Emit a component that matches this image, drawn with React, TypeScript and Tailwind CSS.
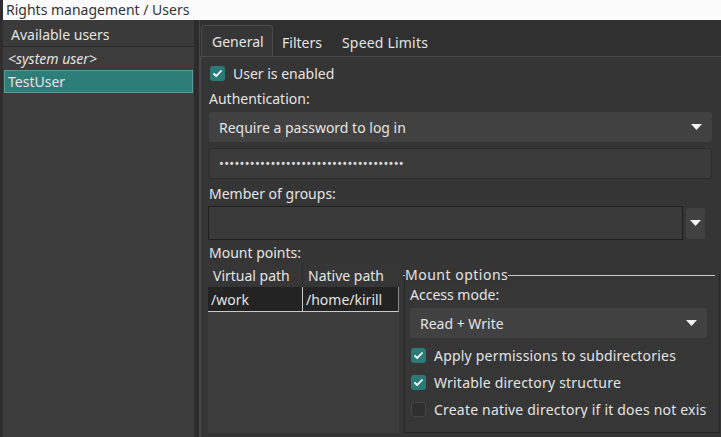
import React from 'react';

const font = { fontFamily: '"Noto Sans", "Open Sans", sans-serif' };

function Arrow() {
  return (
    <svg width="11" height="6" viewBox="0 0 11 6" className="shrink-0">
      <path d="M0 0 L11 0 L5.5 6 Z" fill="#f2f2f2" />
    </svg>
  );
}

function Check({ checked }: { checked: boolean }) {
  return (
    <div
      className={`w-[15px] h-[15px] rounded-[3px] flex items-center justify-center shrink-0 ${
        checked ? 'bg-[#2a7b77]' : 'bg-[#2f2f2f] border border-[#464646]'
      }`}
    >
      {checked && (
        <svg width="11" height="9" viewBox="0 0 11 9">
          <path d="M1.5 4.5 L4.2 7 L9.5 1.5" stroke="#fff" strokeWidth="1.8" fill="none" />
        </svg>
      )}
    </div>
  );
}

function Combo({ text }: { text: string }) {
  return (
    <div className="h-[30px] rounded-[3px] bg-[#414141] flex items-center justify-between pl-[10px] pr-[10px]">
      <span>{text}</span>
      <Arrow />
    </div>
  );
}

export default function App() {
  return (
    <div
      className="w-[721px] h-[437px] overflow-hidden bg-[#2e2e2e] text-[#e4e4e4] text-[14px] flex flex-col"
      style={font}
    >
      {/* title */}
      <div className="h-[20px] bg-[#fbfbfb] text-[#333] leading-[20px] pl-[3px] ml-[3px] shrink-0">
        Rights management / Users
      </div>

      <div className="flex flex-1 min-h-0">
        {/* users list */}
        <div className="w-[191px] ml-[3px] bg-[#3c3c3c] flex flex-col shrink-0">
          <div className="h-[27px] pt-[5px] pl-[8px] bg-[#3a3a3a] border-b border-[#2a2a2a]">
            <span className="block leading-[20px]">Available users</span>
          </div>
          <div className="h-[23px] leading-[23px] pl-[5px] italic">&lt;system user&gt;</div>
          <div className="h-[23px] leading-[21px] pl-[3px] bg-[#2d7d79] border border-[#5a9996] mx-[1px]">
            TestUser
          </div>
        </div>
        <div className="w-[5px] bg-[#2c2c2c] shrink-0" />
        <div className="w-[1px] bg-[#454545] shrink-0" />

        {/* right */}
        <div className="flex-1 flex flex-col min-w-0 bg-[#303030]">
          <div className="h-[36px] flex items-end shrink-0 pl-[1px]">
            <div className="h-[31px] w-[72px] rounded-t-[3px] bg-[#363636] border border-b-0 border-[#4a4a4a] pt-[3px] pl-[10px]">
              <span className="block leading-[26px]">General</span>
            </div>
            <div className="h-[30px] pt-[4px] pl-[9px] pr-[20px]">
              <span className="block leading-[26px]">Filters</span>
            </div>
            <div className="h-[30px] pt-[4px] tracking-[0.2px]">
              <span className="block leading-[26px]">Speed Limits</span>
            </div>
          </div>

          <div className="flex-1 bg-[#353535] border-l border-t border-[#4a4a4a] flex flex-col pl-[8px] pr-[9px] min-h-0">
            <div className="flex items-center gap-[8px] h-[18px] mt-[7px] pl-[1px]">
              <Check checked />
              <span>User is enabled</span>
            </div>
            <div className="h-[20px] leading-[20px] mt-[7px]">Authentication:</div>
            <div className="mt-[3px]">
              <Combo text="Require a password to log in" />
            </div>
            <div className="mt-[6px] h-[31px] rounded-[3px] bg-[#3b3b3b] border border-[#2c2c2c] flex items-center pl-[9px] text-[13px] text-[#dcdcdc] tracking-[0.25px] overflow-hidden">
              {'•'.repeat(36)}
            </div>
            <div className="h-[20px] leading-[20px] mt-[5px]">Member of groups:</div>
            <div className="flex items-center mt-[2px] h-[34px] mr-[7px] -ml-[1px]">
              <div className="flex-1 h-[34px] bg-[#3a3a3a] border border-[#1f1f1f]" />
              <div className="w-[19px] h-[31px] ml-[3px] rounded-[3px] bg-[#414141] flex items-center justify-center">
                <Arrow />
              </div>
            </div>
            <div className="h-[20px] leading-[20px] mt-[3px]">Mount points:</div>

            <div className="flex flex-1 min-h-0 -ml-[1px] -mr-[9px]">
              {/* table */}
              <div className="w-[191px] bg-[#3c3c3c] flex flex-col mb-[4px] shrink-0">
                <div className="h-[24px] flex bg-[#363636]">
                  <div className="w-[95px] pl-[5px] pt-[1px] leading-[24px] border-r border-[#2a2a2a]">Virtual path</div>
                  <div className="flex-1 pl-[5px] pt-[1px] leading-[24px]">Native path</div>
                </div>
                <div className="h-[25px] flex bg-[#232323] border-b border-[#c8c8c8] border-r border-r-[#8a8a8a]">
                  <div className="w-[95px] pl-[3px] pt-[2px] leading-[22px] border-r border-[#c8c8c8]">/work</div>
                  <div className="flex-1 pl-[3px] pt-[2px] leading-[22px] whitespace-nowrap">/home/kirill</div>
                </div>
              </div>

              {/* mount options */}
              <div className="flex-1 ml-[4px] flex flex-col min-w-0">
                <div className="h-[20px] mt-[2px] flex items-center relative z-10">
                  <div className="w-[2px] h-[1px] bg-[#c8c8c8]" />
                  <span className="leading-[20px] whitespace-nowrap bg-[#353535] tracking-[0.5px]">Mount options</span>
                  <div className="flex-1 h-[1px] bg-[#c8c8c8] mr-[6px]" />
                </div>
                <div className="flex-1 -mt-[11px] ml-[1px] mr-[1px] mb-[4px] border-l border-b border-r border-[#262626] bg-[#363636] pt-[9px] pl-[5px] pr-[12px] flex flex-col min-w-0 overflow-hidden">
                  <div className="h-[20px] leading-[20px] mt-[2px]">Access mode:</div>
                  <div className="mt-[3px]">
                    <Combo text="Read + Write" />
                  </div>
                  <div className="flex items-center gap-[8px] h-[18px] mt-[8px] pl-[1px] whitespace-nowrap tracking-[0.2px]">
                    <Check checked />
                    <span>Apply permissions to subdirectories</span>
                  </div>
                  <div className="flex items-center gap-[8px] h-[18px] mt-[9px] pl-[1px] whitespace-nowrap tracking-[0.2px]">
                    <Check checked />
                    <span>Writable directory structure</span>
                  </div>
                  <div className="flex items-center gap-[8px] h-[18px] mt-[9px] pl-[1px] whitespace-nowrap overflow-hidden tracking-[0.2px]">
                    <Check checked={false} />
                    <span>Create native directory if it does not exist</span>
                  </div>
                </div>
              </div>
            </div>
          </div>
        </div>
      </div>
    </div>
  );
}
